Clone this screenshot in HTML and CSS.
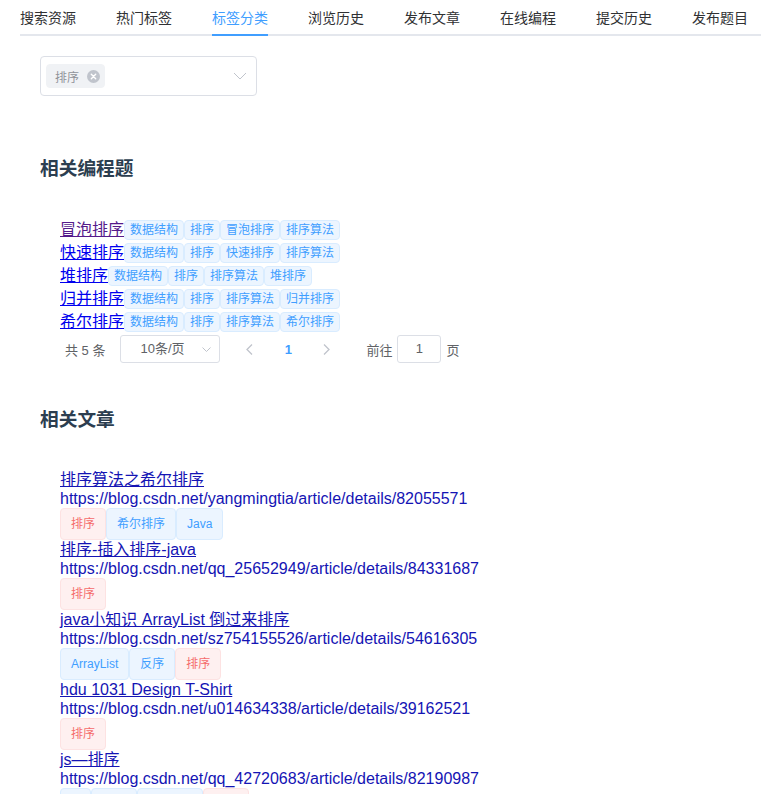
FILE: index.html
```html
<!DOCTYPE html>
<html lang="zh">
<head>
<meta charset="utf-8">
<title>标签分类</title>
<link rel="stylesheet" href="styles.css">
</head>
<body>
<nav class="tabs">
  <div class="tab">搜索资源</div>
  <div class="tab">热门标签</div>
  <div class="tab active">标签分类</div>
  <div class="tab">浏览历史</div>
  <div class="tab">发布文章</div>
  <div class="tab">在线编程</div>
  <div class="tab">提交历史</div>
  <div class="tab">发布题目</div>
</nav>
<main class="main">
  <div class="select">
    <span class="stag">排序<span class="close"><svg width="13" height="13" viewBox="0 0 13 13"><circle cx="6.5" cy="6.5" r="6.5" fill="#c0c4cc"/><path d="M4.3 4.3l4.4 4.4M8.7 4.3l-4.4 4.4" stroke="#fff" stroke-width="1.4" stroke-linecap="round"/></svg></span></span>
    <svg class="arrow" width="14" height="8" viewBox="0 0 14 8"><path d="M1 1l6 6 6-6" fill="none" stroke="#c0c4cc" stroke-width="1"/></svg>
  </div>

  <h3 class="heading h-first">相关编程题</h3>
  <div class="plist">
    <div class="prow"><a class="plink visited" href="#">冒泡排序</a><span class="mtag">数据结构</span><span class="mtag">排序</span><span class="mtag">冒泡排序</span><span class="mtag">排序算法</span></div>
    <div class="prow"><a class="plink" href="#">快速排序</a><span class="mtag">数据结构</span><span class="mtag">排序</span><span class="mtag">快速排序</span><span class="mtag">排序算法</span></div>
    <div class="prow"><a class="plink" href="#">堆排序</a><span class="mtag">数据结构</span><span class="mtag">排序</span><span class="mtag">排序算法</span><span class="mtag">堆排序</span></div>
    <div class="prow"><a class="plink" href="#">归并排序</a><span class="mtag">数据结构</span><span class="mtag">排序</span><span class="mtag">排序算法</span><span class="mtag">归并排序</span></div>
    <div class="prow"><a class="plink" href="#">希尔排序</a><span class="mtag">数据结构</span><span class="mtag">排序</span><span class="mtag">排序算法</span><span class="mtag">希尔排序</span></div>
  </div>
  <div class="pager">
    <span class="total">共 5 条</span>
    <span class="sizes">10条/页<svg class="sarrow" width="9" height="5" viewBox="0 0 9 5"><path d="M0.5 0.5l4 4 4-4" fill="none" stroke="#c0c4cc" stroke-width="1"/></svg></span>
    <span class="pbtn prev"><svg width="7" height="11" viewBox="0 0 7 11"><path d="M6 0.5L1 5.5 6 10.5" fill="none" stroke="#c0c4cc" stroke-width="1.3"/></svg></span>
    <span class="pbtn num">1</span>
    <span class="pbtn next"><svg width="7" height="11" viewBox="0 0 7 11"><path d="M1 0.5L6 5.5 1 10.5" fill="none" stroke="#c0c4cc" stroke-width="1.3"/></svg></span>
    <span class="jumper">前往<span class="jinput">1</span>页</span>
  </div>

  <h3 class="heading h-second">相关文章</h3>
  <div class="alist">
    <div class="article">
      <a class="atitle" href="#">排序算法之希尔排序</a>
      <div class="aurl">https://blog.csdn.net/yangmingtia/article/details/82055571</div>
      <div class="atags"><span class="tag red">排序</span><span class="tag">希尔排序</span><span class="tag">Java</span></div>
    </div>
    <div class="article">
      <a class="atitle" href="#">排序-插入排序-java</a>
      <div class="aurl">https://blog.csdn.net/qq_25652949/article/details/84331687</div>
      <div class="atags"><span class="tag red">排序</span></div>
    </div>
    <div class="article">
      <a class="atitle" href="#">java小知识 ArrayList 倒过来排序</a>
      <div class="aurl">https://blog.csdn.net/sz754155526/article/details/54616305</div>
      <div class="atags"><span class="tag">ArrayList</span><span class="tag">反序</span><span class="tag red">排序</span></div>
    </div>
    <div class="article">
      <a class="atitle" href="#">hdu 1031 Design T-Shirt</a>
      <div class="aurl">https://blog.csdn.net/u014634338/article/details/39162521</div>
      <div class="atags"><span class="tag red">排序</span></div>
    </div>
    <div class="article">
      <a class="atitle" href="#">js—排序</a>
      <div class="aurl">https://blog.csdn.net/qq_42720683/article/details/82190987</div>
      <div class="atags"><span class="tag">js</span><span class="tag">数组</span><span class="tag">数组sort</span><span class="tag red">排序</span></div>
    </div>
  </div>
</main>
</body>
</html>
```

FILE: styles.css
```css
html, body {
  margin: 0;
  padding: 0;
  background: #fff;
  overflow: hidden;
}
body {
  font-family: "Liberation Sans", "Noto Sans CJK SC", sans-serif;
  color: #303133;
}

/* tabs */
.tabs {
  display: flex;
  margin-left: 20px;
  height: 34px;
  border-bottom: 2px solid #e4e7ed;
}
.tab {
  position: relative;
  padding: 0 20px;
  line-height: 34px;
  font-size: 14px;
  color: #303133;
  font-family: "Noto Sans CJK SC", sans-serif;
}
.tab:first-child { padding-left: 0; }
.tab:last-child { padding-right: 0; }
.tab.active { color: #409eff; }
.tab.active::after {
  content: "";
  position: absolute;
  left: 20px;
  right: 20px;
  bottom: -2px;
  height: 2px;
  background: #409eff;
}

.main {
  padding-left: 40px;
}

/* select */
.select {
  box-sizing: border-box;
  margin-top: 20px;
  width: 217px;
  height: 40px;
  border: 1px solid #dcdfe6;
  border-radius: 4px;
  display: flex;
  align-items: center;
  justify-content: space-between;
  padding: 0 9px 0 5px;
}
.stag {
  box-sizing: border-box;
  height: 24px;
  display: inline-flex;
  align-items: center;
  padding: 0 4px 0 8px;
  background: #f0f2f5;
  border: 1px solid #f0f2f5;
  border-radius: 4px;
  font-size: 12px;
  color: #909399;
  font-family: "Noto Sans CJK SC", sans-serif;
}
.close {
  display: inline-flex;
  margin-left: 8px;
}

/* headings */
.heading {
  margin: 0;
  font-size: 18.72px;
  line-height: 26px;
  font-weight: bold;
  color: #2c3e50;
  font-family: "Noto Sans CJK SC", sans-serif;
}
.h-first { margin-top: 58px; }
.h-second { margin-top: 42px; }

/* problem list */
.plist {
  margin-top: 38px;
  padding-left: 20px;
}
.prow {
  display: flex;
  align-items: center;
  height: 23px;
}
.plink {
  font-size: 16px;
  line-height: 23px;
  color: #0000ee;
  text-decoration: underline;
}
.plink.visited { color: #551a8b; }
.mtag {
  box-sizing: border-box;
  display: inline-block;
  height: 20px;
  line-height: 18px;
  padding: 0 5px;
  font-size: 12px;
  color: #409eff;
  background: #ecf5ff;
  border: 1px solid #d9ecff;
  border-radius: 4px;
  white-space: nowrap;
}

/* pagination */
.pager {
  margin-top: 2px;
  padding-left: 25px;
  height: 28px;
  display: flex;
  align-items: center;
  font-size: 13px;
  color: #606266;
}
.total { margin-right: 15px; white-space: pre; }
.sizes {
  box-sizing: border-box;
  position: relative;
  width: 100px;
  height: 28px;
  line-height: 26px;
  border: 1px solid #dcdfe6;
  border-radius: 3px;
  padding-left: 19px;
  color: #606266;
}
.sarrow {
  position: absolute;
  right: 8px;
  top: 11px;
}
.pbtn {
  width: 36px;
  height: 28px;
  display: inline-flex;
  align-items: center;
  justify-content: center;
}
.prev { margin-left: 11px; }
.num {
  margin-left: 3px;
  color: #409eff;
  font-weight: bold;
}
.next { margin-left: 2px; }
.jumper {
  margin-left: 22px;
  display: inline-flex;
  align-items: center;
}
.jinput {
  box-sizing: border-box;
  width: 44px;
  height: 28px;
  line-height: 26px;
  margin: 0 5px;
  border: 1px solid #dcdfe6;
  border-radius: 3px;
  text-align: center;
  color: #606266;
}

/* articles */
.alist {
  margin-top: 39px;
  padding-left: 20px;
}
.atitle {
  display: inline-block;
  font-size: 16px;
  line-height: 20px;
  color: #1414b4;
  text-decoration: underline;
}
.aurl {
  font-size: 16px;
  line-height: 18px;
  color: #1414b4;
}
.atags {
  display: flex;
  height: 32px;
}
.tag {
  box-sizing: border-box;
  height: 32px;
  line-height: 30px;
  padding: 0 10px;
  font-size: 12px;
  color: #409eff;
  background: #ecf5ff;
  border: 1px solid #d9ecff;
  border-radius: 4px;
  white-space: nowrap;
}
.tag.red {
  color: #f56c6c;
  background: #fef0f0;
  border-color: #fde2e2;
}
```
